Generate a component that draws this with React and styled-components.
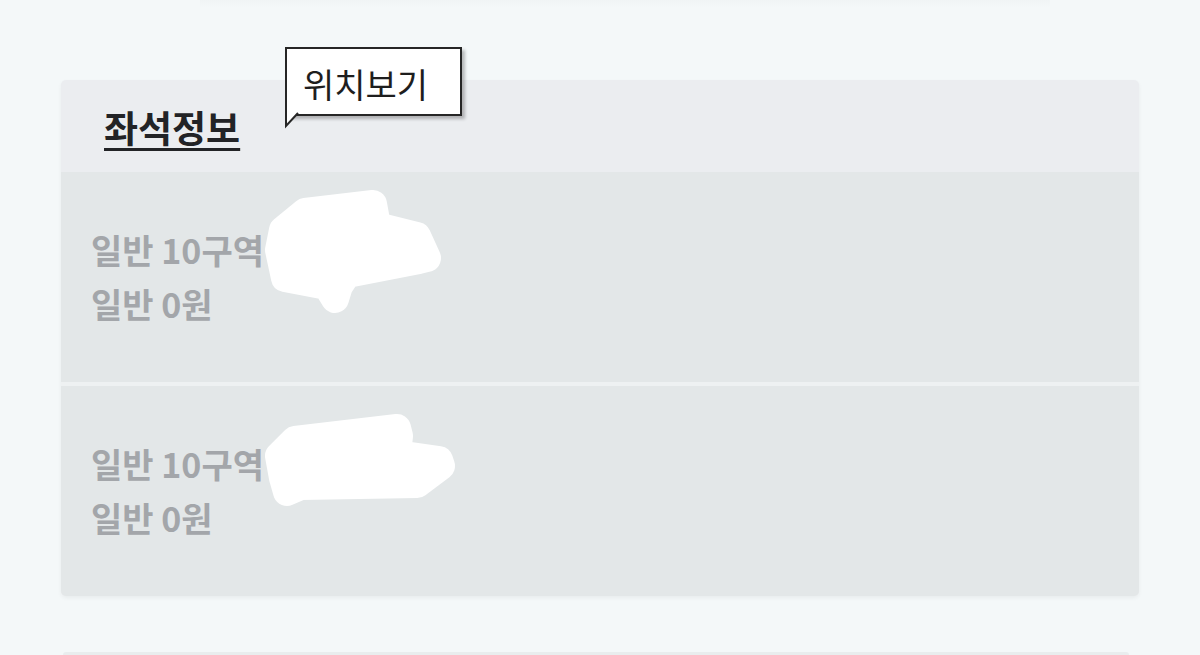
import React from "react";
import styled, { createGlobalStyle } from "styled-components";

const Global = createGlobalStyle`
  html, body { margin: 0; padding: 0; background: #f4f8f9; }
  body { font-family: "Noto Sans CJK KR", "Noto Sans", sans-serif; }
`;

const Page = styled.div`
  width: 1200px;
  height: 655px;
  overflow: hidden;
  box-sizing: border-box;
  padding: 80px 61px 0;
  display: flex;
  flex-direction: column;
  gap: 56px;
  position: relative;
`;

const TopFade = styled.div`
  position: absolute;
  left: 200px;
  right: 150px;
  top: 0;
  height: 8px;
  background: linear-gradient(#f0f4f5, #f4f8f9);
`;

const Card = styled.section`
  background: #ebedf0;
  border-radius: 5px;
  box-shadow: 0 2px 4px rgba(0, 0, 0, 0.05);
  display: flex;
  flex-direction: column;
`;

const Header = styled.div`
  position: relative;
  height: 92px;
  padding-left: 43px;
  display: flex;
  align-items: center;
`;

const Title = styled.h2`
  margin: 0;
  font-size: 37px;
  font-weight: 700;
  color: #222326;
  text-decoration: underline;
  text-decoration-thickness: 3px;
  text-underline-offset: 5px;
  line-height: 1;
  padding-top: 2px;
`;

const Bubble = styled.div`
  position: absolute;
  left: 224px;
  top: -33px;
  width: 177px;
  height: 69px;
  box-sizing: border-box;
  background: #fff;
  border: 2px solid #262626;
  box-shadow: 3px 3px 3px rgba(0, 0, 0, 0.25);
  display: flex;
  align-items: center;
  justify-content: flex-start;
  padding: 4px 0 0 16px;
  font-size: 34px;
  font-weight: 400;
  color: #1e1e1e;
`;

const Tail = styled.svg`
  position: absolute;
  left: -2px;
  top: 100%;
  margin-top: -1px;
  overflow: visible;
`;

const Row = styled.div`
  position: relative;
  background: #e3e7e8;
  height: 210px;
  box-sizing: border-box;
  padding: 51px 30px 51px;
  & + & {
    border-top: 4px solid #eef1f2;
    height: 214px;
  }
  &:last-child {
    border-radius: 0 0 5px 5px;
  }
`;

const Line = styled.div`
  font-size: 34px;
  font-weight: 700;
  line-height: 54px;
  color: #a3a6aa;
`;

const Scribble = styled.svg`
  position: absolute;
  left: ${(p) => p.$x}px;
  top: ${(p) => p.$y}px;
`;

const NextCard = styled.div`
  height: 20px;
  background: #e9edee;
  border-radius: 4px 4px 0 0;
  margin: 0 10px 0 2px;
`;

const blobs = [
  "M44,30 L112,22 L116,44 L156,54 L166,76 L158,78 L86,92 L78,104 L74,117 L66,104 L24,96 L18,68 L22,48 Z",
  "M34,34 L136,22 L138,30 L136,48 L178,54 L180,60 L156,78 L40,80 L26,86 L22,72 L18,50 Z",
];

const seats = [
  { zone: "일반 10구역", price: "일반 0원", blob: 0, x: 200, y: 10 },
  { zone: "일반 10구역", price: "일반 0원", blob: 1, x: 200, y: 20 },
];

export default function App() {
  return (
    <>
      <Global />
      <Page>
        <TopFade />
        <Card>
          <Header>
            <Title>좌석정보</Title>
            <Bubble>
              위치보기
              <Tail width="16" height="14" viewBox="0 0 16 14">
                <path d="M1,0 L1,13 L13,0" fill="#fff" stroke="#262626" strokeWidth="2" />
              </Tail>
            </Bubble>
          </Header>
          {seats.map((s, i) => (
            <Row key={i}>
              <Line>{s.zone}</Line>
              <Line>{s.price}</Line>
              <Scribble $x={s.x} $y={s.y} width="200" height="140" viewBox="0 0 200 140">
                <path
                  d={blobs[s.blob]}
                  fill="#fff"
                  stroke="#fff"
                  strokeWidth="28"
                  strokeLinejoin="round"
                />
              </Scribble>
            </Row>
          ))}
        </Card>
        <NextCard />
      </Page>
    </>
  );
}
